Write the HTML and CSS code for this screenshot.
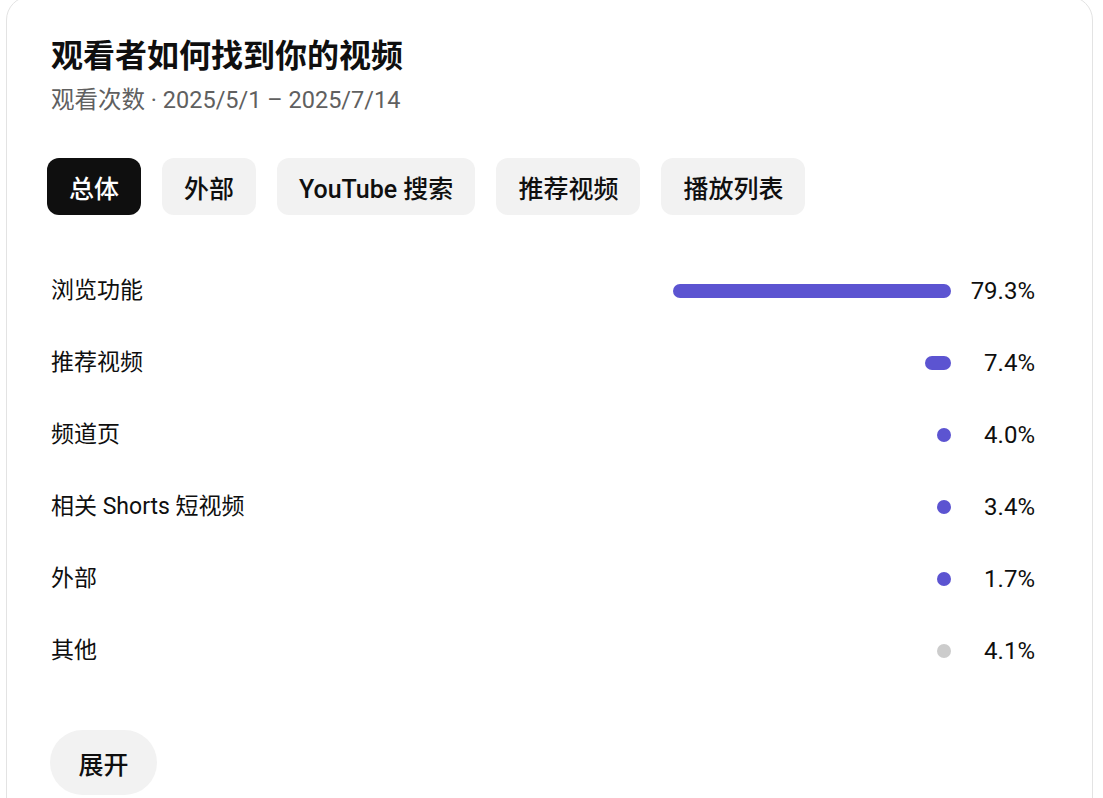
FILE: index.html
```html
<!DOCTYPE html>
<html lang="zh-CN">
<head>
<meta charset="utf-8">
<title>观看者如何找到你的视频</title>
<link rel="stylesheet" href="styles.css">
</head>
<body>
<div class="card">
  <h1 class="title">观看者如何找到你的视频</h1>
  <div class="subtitle">观看次数 · 2025/5/1 – 2025/7/14</div>
  <div class="tabs">
    <button class="tab active">总体</button>
    <button class="tab">外部</button>
    <button class="tab">YouTube 搜索</button>
    <button class="tab">推荐视频</button>
    <button class="tab">播放列表</button>
  </div>
  <div class="rows">
    <div class="row"><span class="label">浏览功能</span><span class="track"><span class="bar" style="width:278px"></span></span><span class="pct">79.3%</span></div>
    <div class="row"><span class="label">推荐视频</span><span class="track"><span class="bar" style="width:26px"></span></span><span class="pct">7.4%</span></div>
    <div class="row"><span class="label">频道页</span><span class="track"><span class="bar" style="width:14px"></span></span><span class="pct">4.0%</span></div>
    <div class="row"><span class="label">相关 Shorts 短视频</span><span class="track"><span class="bar" style="width:14px"></span></span><span class="pct">3.4%</span></div>
    <div class="row"><span class="label">外部</span><span class="track"><span class="bar" style="width:14px"></span></span><span class="pct">1.7%</span></div>
    <div class="row"><span class="label">其他</span><span class="track"><span class="bar other" style="width:14px"></span></span><span class="pct">4.1%</span></div>
  </div>
  <button class="expand">展开</button>
</div>
</body>
</html>
```

FILE: styles.css
```css
* { box-sizing: border-box; }
html, body {
  margin: 0;
  padding: 0;
  background: #ffffff;
  overflow: hidden;
}
body {
  font-family: Roboto, "Noto Sans CJK SC", sans-serif;
  color: #0f0f0f;
  height: 798px;
}
.card {
  margin: -4px 0 0 6px;
  width: 1087px;
  height: 840px;
  border: 1px solid #e3e3e3;
  border-radius: 24px;
  padding: 39px 57px 0 44px;
}
.title {
  margin: 0;
  font-size: 32px;
  line-height: 40px;
  font-weight: 700;
  letter-spacing: 0;
}
.subtitle {
  margin-top: 9px;
  font-size: 23.5px;
  line-height: 30px;
  color: #606060;
}
.tabs {
  display: flex;
  gap: 21px;
  margin-top: 43px;
  margin-left: -4px;
}
.tab {
  font-family: inherit;
  border: none;
  height: 57px;
  padding: 0 22px;
  border-radius: 12px;
  background: #f2f2f2;
  color: #0f0f0f;
  font-size: 25px;
  font-weight: 500;
}
.tab.active {
  background: #0f0f0f;
  color: #ffffff;
}
.rows {
  margin-top: 40px;
  display: flex;
  flex-direction: column;
}
.row {
  height: 72px;
  display: flex;
  align-items: center;
}
.label {
  flex: 1;
  font-size: 23px;
  line-height: 30px;
  margin-top: -1px;
}
.track {
  width: 350px;
  display: flex;
  justify-content: flex-end;
}
.bar {
  height: 14px;
  border-radius: 7px;
  background: #5c54d1;
}
.bar.other {
  background: #cccccc;
}
.pct {
  width: 84px;
  text-align: right;
  font-size: 24px;
  line-height: 30px;
}
.expand {
  font-family: inherit;
  margin-top: 43px;
  margin-left: -1px;
  border: none;
  height: 65px;
  width: 107px;
  border-radius: 33px;
  background: #f2f2f2;
  color: #0f0f0f;
  font-size: 25px;
  font-weight: 500;
}
```
